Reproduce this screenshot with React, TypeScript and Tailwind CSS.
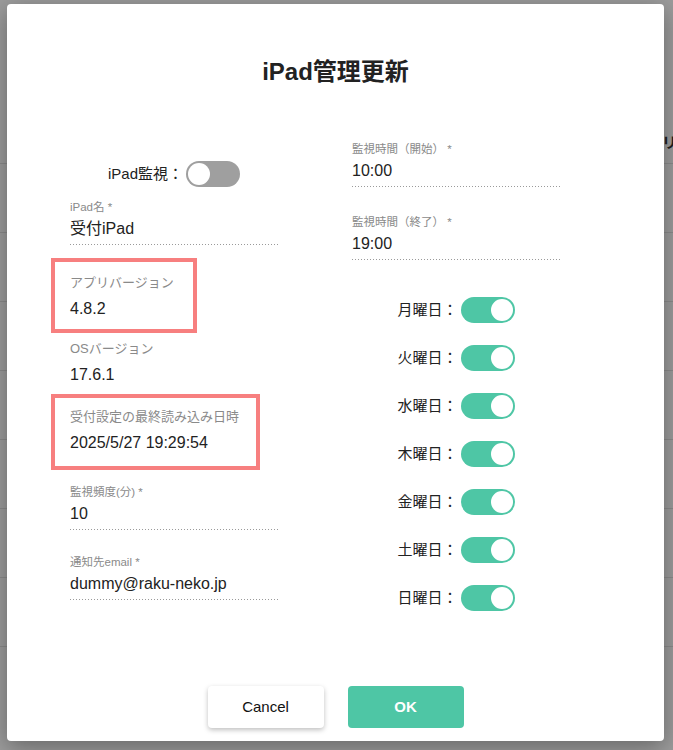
import React from "react";

const FONT = "font-['Liberation_Sans','Noto_Sans_CJK_JP',sans-serif]";

function Toggle({ on }: { on: boolean }) {
  return (
    <div
      className={
        on
          ? "flex h-[26px] w-[54px] shrink-0 items-center justify-end rounded-full bg-[#4ec6a5] px-[2px]"
          : "flex h-[26px] w-[54px] shrink-0 items-center justify-start rounded-full bg-[#9f9f9f] px-[2px]"
      }
    >
      <div className="h-[22px] w-[22px] rounded-full bg-white" />
    </div>
  );
}

function Dotted() {
  return (
    <div className="mt-[3px] h-px w-[208px] bg-[linear-gradient(to_right,#9a9a9a_1px,transparent_1px)] bg-[length:3px_1px] bg-repeat-x" />
  );
}

function InputField({ label, value, className }: { label: string; value: string; className?: string }) {
  return (
    <div className={className}>
      <div className="h-[14px] text-[11.5px] leading-[14px] text-[#8a8a8a]">{label}</div>
      <div className="mt-[3px] h-[24px] text-[16px] leading-[24px] text-[#222]">{value}</div>
      <Dotted />
    </div>
  );
}

function StaticField({ label, value }: { label: string; value: string }) {
  return (
    <div>
      <div className="h-[16px] text-[13px] leading-[16px] text-[#8a8a8a] whitespace-nowrap">{label}</div>
      <div className="mt-[6px] h-[24px] text-[16px] leading-[24px] text-[#222] whitespace-nowrap">{value}</div>
    </div>
  );
}

const days = ["月", "火", "水", "木", "金", "土", "日"];

export default function App() {
  return (
    <div className={`relative h-[750px] w-[673px] overflow-hidden bg-[#9c9c9c] ${FONT}`}>
      {/* underlying page */}
      <div className="flex flex-col">
        <div className="relative h-[164px] border-b border-[#8b8b8b]">
          <span className="absolute left-[662px] top-[132px] text-[15px] font-bold text-[#1e1e1e]">リ</span>
        </div>
        <div className="h-[69px] border-b border-[#8b8b8b]" />
        <div className="h-[69px] border-b border-[#8b8b8b]" />
        <div className="h-[69px] border-b border-[#8b8b8b]" />
        <div className="h-[69px] border-b border-[#8b8b8b]" />
        <div className="h-[69px] border-b border-[#8b8b8b]" />
        <div className="h-[69px] border-b border-[#8b8b8b]" />
        <div className="h-[69px] border-b border-[#8b8b8b]" />
      </div>

      {/* modal */}
      <div className="absolute left-[7px] top-[4px] flex h-[737px] w-[657px] flex-col rounded-[4px] bg-white shadow-[0_6px_24px_rgba(0,0,0,0.35)]">
        <div className="mt-[52px] h-[32px] text-center text-[24px] font-semibold leading-[32px] text-[#222]">
          iPad管理更新
        </div>

        <div className="mt-[54px] flex">
          {/* left column */}
          <div className="ml-[63px] flex w-[282px] flex-col">
            <div className="mt-[19px] flex h-[26px] w-[208px] items-center justify-center gap-[3px]">
              <span className="text-[15px] text-[#222]">iPad監視：</span>
              <Toggle on={false} />
            </div>
            <InputField className="mt-[13px]" label="iPad名 *" value="受付iPad" />
            <div className="-ml-[19px] mt-[13px] w-[146px] border-4 border-[#f77f7f] pb-[8px] pl-[15px] pt-[13px]">
              <StaticField label="アプリバージョン" value="4.8.2" />
            </div>
            <div className="mt-[8px]">
              <StaticField label="OSバージョン" value="17.6.1" />
            </div>
            <div className="-ml-[19px] mt-[7px] w-[209px] border-4 border-[#f77f7f] pb-[11px] pl-[15px] pt-[11px]">
              <StaticField label="受付設定の最終読み込み日時" value="2025/5/27 19:29:54" />
            </div>
            <InputField className="mt-[15px]" label="監視頻度(分) *" value="10" />
            <InputField className="mt-[25px]" label="通知先email *" value="dummy@raku-neko.jp" />
          </div>

          {/* right column */}
          <div className="flex flex-col">
            <InputField label="監視時間（開始） *" value="10:00" />
            <InputField className="mt-[28px]" label="監視時間（終了） *" value="19:00" />
            <div className="mt-[37px] flex flex-col gap-[22px]">
              {days.map((d) => (
                <div key={d} className="flex h-[26px] w-[208px] items-center justify-center gap-[3px]">
                  <span className="text-[15px] text-[#222]">{d}曜日：</span>
                  <Toggle on={true} />
                </div>
              ))}
            </div>
          </div>
        </div>

        <div className="mb-[13px] mt-auto flex justify-center gap-[24px]">
          <button className="h-[42px] w-[116px] rounded-[4px] bg-white text-[15px] font-medium text-[#111] shadow-[0_2px_5px_rgba(0,0,0,0.25)]">
            Cancel
          </button>
          <button className="h-[42px] w-[116px] rounded-[4px] bg-[#4ec6a5] text-[15px] font-bold text-white">
            OK
          </button>
        </div>
      </div>
    </div>
  );
}
